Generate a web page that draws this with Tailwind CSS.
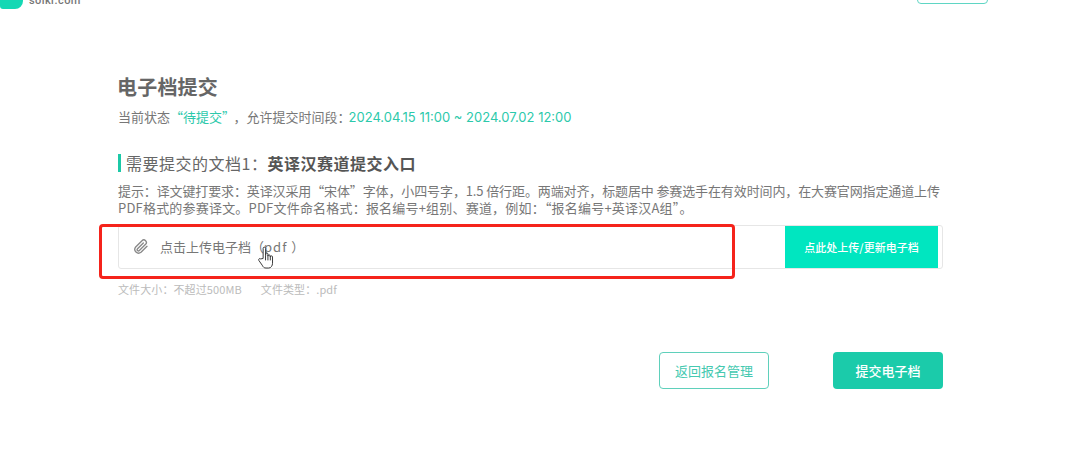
<!DOCTYPE html>
<html lang="zh-CN">

<head>
   <meta charset="UTF-8">
   <meta name="viewport" content="width=device-width, initial-scale=1.0">
   <title>电子档提交</title>
   <script src="https://cdn.jsdelivr.net/npm/@tailwindcss/browser@4"></script>
</head>

<body class="bg-white h-[458px] overflow-hidden font-['Noto_Sans_CJK_SC','Noto_Sans',sans-serif]">
   <!-- header, scrolled almost out of view -->
   <header class="h-[10px] overflow-hidden flex items-end">
      <div class="w-[23px] h-[24px] mb-px bg-[#14d8b4] rounded-br-[8px] rounded-bl-[3px]"></div>
      <span class="ml-[6px] mb-[3px] text-[11px] leading-[13px] tracking-[0.4px] font-medium text-[#777] font-['Roboto',sans-serif]">soikr.com</span>
      <button class="ml-auto mr-[97px] mb-[6px] w-[71px] h-[20px] border border-[#5fd6c4] rounded-[4px]"></button>
   </header>

   <main class="relative w-[825px] ml-[118px] mt-[63px]">
      <h1 class="text-[20px] leading-[28px] font-bold text-[#666] -ml-px tracking-[0.2px]">电子档提交</h1>
      <p class="mt-[6px] text-[13px] leading-[20px] text-[#777]">当前状态<span class="text-[#2cc9ab]">“待提交”</span><span class="ml-[5px]">，允许提交时间段：</span><span class="-ml-[2px] text-[#2cc9ab] font-['Inter',sans-serif]">2024.04.15 11:00 ~ 2024.07.02 12:00</span></p>

      <h2 class="mt-[24px] flex items-center text-[16px] leading-[24px] tracking-[0.5px] text-[#666]">
         <span class="w-[3px] h-[18px] mr-[5px] bg-[#1cc9a7]"></span>需要提交的文档1：<b class="font-bold text-[#555]">英译汉赛道提交入口</b>
      </h2>
      <p class="mt-[7px] text-[13px] leading-[17px] tracking-[-0.12px] text-[#777] whitespace-nowrap">提示：译文键打要求：英译汉采用“宋体”字体，小四号字，1.5 倍行距。两端对齐，标题居中 参赛选手在有效时间内，在大赛官网指定通道上传<br><span class="tracking-[0.2px]">PDF格式的参赛译文。PDF文件命名格式：报名编号+组别、赛道，例如：“报名编号+英译汉A组”。</span></p>

      <div class="mt-[9px] h-[44px] flex items-stretch border border-[#e6e6e6] rounded-[3px]">
         <div class="flex-1 flex items-center pl-[14px] text-[13px] text-[#777]">
            <svg class="w-[16px] h-[16px] mr-[11px] text-[#888]" viewBox="0 0 24 24" fill="none" stroke="currentColor" stroke-width="2" stroke-linecap="round" stroke-linejoin="round">
               <path d="M21 11l-9 9a5.700 5.700 0 0 1-8-8l9.500-9.500a3.800 3.800 0 0 1 5.400 5.400l-9.400 9.400a1.900 1.900 0 0 1-2.700-2.700l8.700-8.600" />
            </svg>
            <span>点击上传电子档（<span class="tracking-[1px]">pdf </span>）</span>
         </div>
         <button class="w-[153px] mr-[4px] bg-[#00e6c0] text-white text-[11px] font-medium">点此处上传/更新电子档</button>
      </div>

      <p class="mt-[12px] text-[11px] leading-[16px] tracking-[0.1px] text-[#bbb]">文件大小：不超过500MB<span class="ml-[19px]">文件类型：.pdf</span></p>

      <div class="mt-[55px] flex justify-end gap-[64px]">
         <button class="w-[110px] h-[37px] border border-[#5fd0bb] rounded-[4px] bg-white text-[#45c9b0] text-[13px]">返回报名管理</button>
         <button class="w-[110px] h-[37px] rounded-[4px] bg-[#1bcbaa] text-white text-[13px] font-medium">提交电子档</button>
      </div>

      <!-- red annotation drawn over the screenshot -->
      <div class="absolute left-[-19px] top-[151px] w-[636px] h-[55px] border-[3px] border-[#f5231b] rounded-[4px]"></div>

      <!-- hand cursor -->
      <svg class="absolute left-[139px] top-[173px] w-[18px] h-[23px]" viewBox="0 0 17 24" fill="#fff" stroke="#333" stroke-width="1" stroke-linejoin="round">
         <path d="M5.500 13V2.500a1.300 1.300 0 0 1 2.600 0V10V8.500a1.200 1.200 0 0 1 2.400 0V10.500a1.200 1.200 0 0 1 2.400 0V11.500a1.200 1.200 0 0 1 2.400 0V18c0 2.500-1.500 5-4 5H8.500c-2 0-3-1-4-3L1 15c-.7-1.500 1-2.500 2-1.500z" />
         <path d="M8 10v5M10.500 10v5M13 11v4" fill="none" />
      </svg>
   </main>
</body>

</html>
